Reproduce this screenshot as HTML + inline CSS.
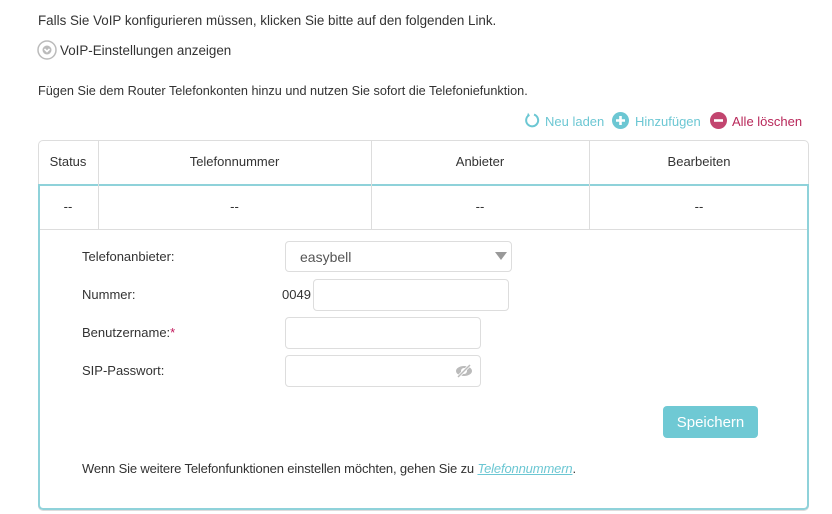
<!DOCTYPE html>
<html><head><meta charset="utf-8"><style>
*{box-sizing:border-box}
body{margin:0;width:832px;height:514px;background:#fff;font-family:"Liberation Sans",Arial,sans-serif;color:#333;font-size:13px;position:relative;overflow:hidden}
.a{position:absolute;white-space:nowrap}
.inp{position:absolute;border:1px solid #ddd;border-radius:4px;background:#fff}
.hd{position:absolute;top:140px;height:45px;line-height:44px;text-align:center;font-size:13px;color:#333}
</style></head><body>
<div class="a" style="left:38px;top:13px;font-size:13.4px">Falls Sie VoIP konfigurieren müssen, klicken Sie bitte auf den folgenden Link.</div>
<svg class="a" style="left:37px;top:40px" width="20" height="20" viewBox="0 0 20 20"><circle cx="10" cy="10" r="9" fill="#fff" stroke="#bbb" stroke-width="1.5"/><circle cx="10" cy="10" r="4.5" fill="#bbb"/><path d="M7.5 9 L10 11.5 L12.5 9" fill="none" stroke="#fff" stroke-width="1.6"/></svg>
<div class="a" style="left:60px;top:43px;font-size:13.4px">VoIP-Einstellungen anzeigen</div>
<div class="a" style="left:38px;top:84px;font-size:12.7px">Fügen Sie dem Router Telefonkonten hinzu und nutzen Sie sofort die Telefoniefunktion.</div>
<svg class="a" style="left:524px;top:112px" width="16" height="16" viewBox="0 0 16 16"><path d="M5 3.2 A6 6 0 1 0 10 2.6" fill="none" stroke="#6cc7d3" stroke-width="2"/><path d="M4 0.8 L6 3.6 L2.8 4.6 Z" fill="#6cc7d3"/></svg>
<div class="a" style="left:545px;top:114px;color:#6cc7d3;font-size:13px">Neu laden</div>
<svg class="a" style="left:612px;top:112px" width="17" height="17" viewBox="0 0 17 17"><circle cx="8.5" cy="8.5" r="8.5" fill="#6cc7d3"/><path d="M8.5 4v9M4 8.5h9" stroke="#fff" stroke-width="2.6"/></svg>
<div class="a" style="left:635px;top:114px;color:#6cc7d3;font-size:13px">Hinzufügen</div>
<svg class="a" style="left:710px;top:112px" width="17" height="17" viewBox="0 0 17 17"><circle cx="8.5" cy="8.5" r="8.5" fill="#c2456f"/><path d="M4 8.5h9" stroke="#fff" stroke-width="2.6"/></svg>
<div class="a" style="left:732px;top:114px;color:#b8285a;font-size:13px">Alle löschen</div>

<div class="a" style="left:38px;top:140px;width:771px;height:371px;border:1px solid #ddd;border-radius:5px"></div>
<div class="a" style="left:38px;top:184px;width:771px;height:326px;border:2px solid #8fd2da;border-radius:0 0 5px 5px"></div>
<div class="a" style="left:40px;top:229px;width:767px;height:1px;background:#ddd"></div>
<div class="a" style="left:98px;top:141px;width:1px;height:88px;background:#ddd"></div>
<div class="a" style="left:371px;top:141px;width:1px;height:88px;background:#ddd"></div>
<div class="a" style="left:589px;top:141px;width:1px;height:88px;background:#ddd"></div>
<div class="hd" style="left:38px;width:60px">Status</div>
<div class="hd" style="left:98px;width:273px">Telefonnummer</div>
<div class="hd" style="left:371px;width:218px">Anbieter</div>
<div class="hd" style="left:589px;width:220px">Bearbeiten</div>
<div class="hd" style="top:185px;left:38px;width:60px">--</div>
<div class="hd" style="top:185px;left:98px;width:273px">--</div>
<div class="hd" style="top:185px;left:371px;width:218px">--</div>
<div class="hd" style="top:185px;left:589px;width:220px">--</div>

<div class="a" style="left:82px;top:249px">Telefonanbieter:</div>
<div class="a" style="left:82px;top:287px">Nummer:</div>
<div class="a" style="left:82px;top:325px">Benutzername:<span style="color:#c2185b">*</span></div>
<div class="a" style="left:82px;top:363px">SIP-Passwort:</div>
<div class="inp" style="left:285px;top:241px;width:227px;height:31px"></div>
<div class="a" style="left:300px;top:249px;font-size:14px;color:#555">easybell</div>
<svg class="a" style="left:495px;top:252px" width="12" height="8"><path d="M0 0h12L6 8z" fill="#999"/></svg>
<div class="a" style="left:282px;top:287px">0049</div>
<div class="inp" style="left:313px;top:279px;width:196px;height:32px"></div>
<div class="inp" style="left:285px;top:317px;width:196px;height:32px"></div>
<div class="inp" style="left:285px;top:355px;width:196px;height:32px"></div>
<svg class="a" style="left:455px;top:364px" width="18" height="14" viewBox="0 0 18 14"><ellipse cx="9" cy="7" rx="8" ry="5" fill="#bbb"/><ellipse cx="9" cy="7" rx="3" ry="3" fill="#fff"/><path d="M3 13L15 1" stroke="#fff" stroke-width="3"/><path d="M3 13L15 1" stroke="#bbb" stroke-width="1.5"/></svg>
<div class="a" style="left:663px;top:406px;width:95px;height:32px;background:#6fc9d4;border-radius:4px;color:#fff;font-size:15px;line-height:33px;text-align:center">Speichern</div>
<div class="a" style="left:82px;top:461px;font-size:13px;letter-spacing:-0.15px">Wenn Sie weitere Telefonfunktionen einstellen möchten, gehen Sie zu <i style="color:#6cc7d3;text-decoration:underline">Telefonnummern</i>.</div>
</body></html>
